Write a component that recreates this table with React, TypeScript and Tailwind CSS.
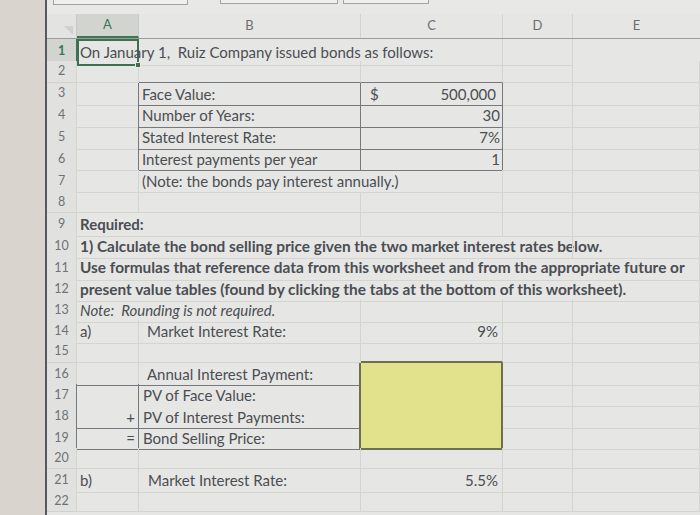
import React from "react";

type Edge = "g" | "d" | "y" | "y1" | "n";

const RIGHT: Record<Edge, string> = {
  g: "border-r border-r-[#d4d4d1]",
  d: "border-r border-r-[#75787d]",
  y: "border-r-2 border-r-[#6d6f55]",
  y1: "border-r border-r-[#6d6f55]",
  n: "",
};

const BOTTOM: Record<Edge, string> = {
  g: "border-b border-b-[#d4d4d1]",
  d: "border-b border-b-[#75787d]",
  y: "border-b-2 border-b-[#6d6f55]",
  y1: "border-b border-b-[#6d6f55]",
  n: "",
};

const COLS = "grid grid-cols-[30px_62px_222px_142px_70px_1fr]";

type CellProps = {
  children?: React.ReactNode;
  r?: Edge;
  b?: Edge;
  className?: string;
};

const Cell = ({ children, r = "g", b = "g", className = "" }: CellProps) => {
  return (
    <div
      className={`flex items-center whitespace-pre px-[3px] ${RIGHT[r]} ${BOTTOM[b]} ${className}`}
    >
      {children}
    </div>
  );
};

type RowProps = {
  n: number;
  hr?: Edge;
  tall?: boolean;
  children: React.ReactNode;
};

// one sheet row: row number + columns A..E
const Row = ({ n, hr = "g", tall = false, children }: RowProps) => {
  return (
    <div
      className={`${COLS} ${tall ? "h-[21.8px]" : "h-[21.3px]"} text-[15px] text-[#4a4e53]`}
    >
      <div
        className={`flex items-center justify-center border-b border-b-[#d0d0cd] bg-[#e1e1df] text-[12.5px] text-[#6e7276] ${RIGHT[hr]}`}
      >
        {n}
      </div>
      {children}
    </div>
  );
};

const Blank = ({ n, tall }: { n: number; tall?: boolean }) => (
  <Row n={n} tall={tall}>
    <Cell />
    <Cell />
    <Cell />
    <Cell />
    <Cell />
  </Row>
);

const App = () => {
  return (
    <div className="flex h-[515px] w-[700px] overflow-hidden bg-[#e6e6e4] font-['Lato',sans-serif]">
      {/* outside the window */}
      <div className="w-[47px] shrink-0 border-r-2 border-r-[#57595c] bg-[#d9d5ce]" />

      <div className="flex flex-1 flex-col">
        {/* bits of the formula bar */}
        <div className="flex h-[14px] shrink-0 items-start bg-[#e8e8e6]">
          <div className="ml-[6px] h-[5px] w-[135px] border border-t-0 border-[#a3a3a0] bg-[#efefed]" />
          <div className="ml-[32px] h-[4px] w-[118px] border border-t-0 border-[#a3a3a0] bg-[#efefed]" />
          <div className="ml-[5px] h-[4px] w-[86px] border border-t-0 border-[#a3a3a0] bg-[#efefed]" />
        </div>

        {/* column headers */}
        <div className={`${COLS} h-[25px] shrink-0 border-b border-b-[#9c9d9b] text-[13px] text-[#6b6f73]`}>
          <div className="flex items-end justify-end border-r border-r-[#c8c8c5] bg-[#e3e3e1] p-[3px]">
            <div className="h-0 w-0 border-l-[9px] border-t-[9px] border-l-transparent border-t-[#d0d0cd]" />
          </div>
          <div className="flex items-center justify-center border-r border-b-2 border-r-[#c8c8c5] border-b-[#3f7452] bg-[#d2d4cf] text-[#3e7453]">
            A
          </div>
          <div className="flex items-center justify-center border-r border-r-[#d4d4d1]">B</div>
          <div className="flex items-center justify-center border-r border-r-[#d4d4d1]">C</div>
          <div className="flex items-center justify-center border-r border-r-[#d4d4d1]">D</div>
          <div className="flex items-center justify-center">E</div>
        </div>

        {/* row 1, A1 selected */}
        <div className={`${COLS} h-[21.8px] text-[15px] text-[#4a4e53]`}>
          <div className="flex items-center justify-center border-r border-b border-r-[#3f7452] border-b-[#d0d0cd] bg-[#d2d4cf] text-[12.5px] font-bold text-[#3e7453]">
            1
          </div>
          <div className="relative flex items-center whitespace-pre border-2 border-[#3f6f52] px-[1px]">
            On January 1,  Ruiz Company issued bonds as follows:
            <span className="absolute -bottom-[4px] -right-[4px] h-[6px] w-[6px] border border-[#e6e6e4] bg-[#3f6f52]" />
          </div>
          <Cell r="n" />
          <Cell />
          <Cell />
        </div>

        <Row n={2} tall>
          <Cell />
          <Cell b="d" />
          <Cell b="d" />
          <Cell />
          <Cell />
        </Row>

        <Row n={3} tall>
          <Cell r="d" />
          <Cell r="d" b="d">Face Value:</Cell>
          <Cell r="d" b="d" className="justify-between pl-[9px] pr-[6px]">
            <span>$</span>
            <span>500,000</span>
          </Cell>
          <Cell />
          <Cell />
        </Row>

        <Row n={4} tall>
          <Cell r="d" />
          <Cell r="d" b="d">Number of Years:</Cell>
          <Cell r="d" b="d" className="justify-end pr-[2px]">30</Cell>
          <Cell />
          <Cell />
        </Row>

        <Row n={5} tall>
          <Cell r="d" />
          <Cell r="d" b="d">Stated Interest Rate:</Cell>
          <Cell r="d" b="d" className="justify-end pr-[2px]">7%</Cell>
          <Cell />
          <Cell />
        </Row>

        <Row n={6} tall>
          <Cell r="d" />
          <Cell r="d" b="d">Interest payments per year</Cell>
          <Cell r="d" b="d" className="justify-end pr-[2px]">1</Cell>
          <Cell />
          <Cell />
        </Row>

        <Row n={7} tall>
          <Cell />
          <Cell r="n">(Note: the bonds pay interest annually.)</Cell>
          <Cell />
          <Cell />
          <Cell />
        </Row>

        <Blank n={8} tall />

        <Row n={9} tall>
          <Cell r="n" className="font-bold">Required:</Cell>
          <Cell />
          <Cell />
          <Cell />
          <Cell />
        </Row>

        <Row n={10}>
          <Cell r="n" className="text-[15.4px] font-bold">
            1) Calculate the bond selling price given the two market interest rates below.
          </Cell>
          <Cell r="n" />
          <Cell r="n" />
          <Cell />
          <Cell />
        </Row>

        <Row n={11}>
          <Cell r="n" className="text-[15.4px] font-bold">
            Use formulas that reference data from this worksheet and from the appropriate future or
          </Cell>
          <Cell r="n" />
          <Cell r="n" />
          <Cell r="n" />
          <Cell />
        </Row>

        <Row n={12}>
          <Cell r="n" className="text-[15.4px] font-bold">
            present value tables (found by clicking the tabs at the bottom of this worksheet).
          </Cell>
          <Cell r="n" />
          <Cell r="n" />
          <Cell r="n" />
          <Cell />
        </Row>

        <Row n={13}>
          <Cell r="n" className="italic">Note:  Rounding is not required.</Cell>
          <Cell />
          <Cell />
          <Cell />
          <Cell />
        </Row>

        <Row n={14}>
          <Cell>a)</Cell>
          <Cell className="pl-[8px]">Market Interest Rate:</Cell>
          <Cell className="justify-end pr-[4px]">9%</Cell>
          <Cell />
          <Cell />
        </Row>

        <Row n={15}>
          <Cell />
          <Cell />
          <Cell b="y" />
          <Cell />
          <Cell />
        </Row>

        <Row n={16}>
          <Cell b="d" />
          <Cell r="y" b="d" className="pl-[8px]">Annual Interest Payment:</Cell>
          <Cell r="y" b="y" className="bg-[#e3e28c]" />
          <Cell />
          <Cell />
        </Row>

        <Row n={17} hr="d">
          <Cell r="d" b="n" />
          <Cell r="y" b="n" className="pl-[4px]">PV of Face Value:</Cell>
          <Cell r="y" b="n" className="bg-[#e3e28c]" />
          <Cell />
          <Cell />
        </Row>

        <Row n={18} hr="d">
          <Cell r="d" b="d" className="justify-end">+</Cell>
          <Cell r="y" b="d" className="pl-[4px]">PV of Interest Payments:</Cell>
          <Cell r="y" b="y1" className="bg-[#e3e28c]" />
          <Cell />
          <Cell />
        </Row>

        <Row n={19} hr="d">
          <Cell r="d" b="d" className="justify-end">=</Cell>
          <Cell r="y" b="d" className="pl-[4px]">Bond Selling Price:</Cell>
          <Cell r="y" b="y" className="bg-[#e3e28c]" />
          <Cell />
          <Cell />
        </Row>

        <Blank n={20} />

        <Row n={21}>
          <Cell>b)</Cell>
          <Cell className="pl-[9px]">Market Interest Rate:</Cell>
          <Cell className="justify-end pr-[4px]">5.5%</Cell>
          <Cell />
          <Cell />
        </Row>

        <Blank n={22} />
      </div>
    </div>
  );
};

export default App;
